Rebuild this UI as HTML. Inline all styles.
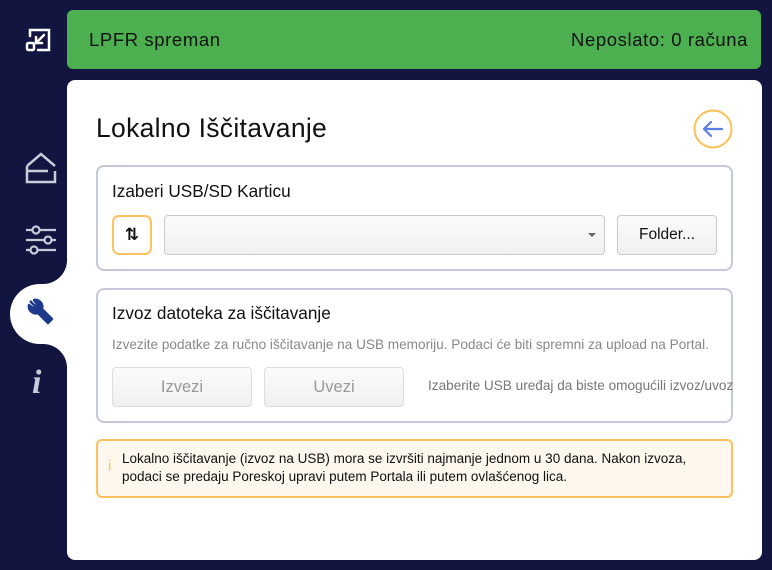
<!DOCTYPE html>
<html><head><meta charset="utf-8"><style>
*{box-sizing:border-box;margin:0;padding:0}
body{width:772px;height:570px;background:#121540;font-family:"Liberation Sans","DejaVu Sans",sans-serif;position:relative;overflow:hidden;color:#111}
.abs{position:absolute}
.green{left:67px;top:10px;width:694px;height:59px;background:#4caf50;border-radius:6px;font-size:18.5px;letter-spacing:0.6px;color:#111;display:flex;justify-content:space-between;align-items:center;padding:0 13px 0 22px}
.panel{left:67px;top:80px;width:695px;height:480px;background:#fff;border-radius:8px}
.card{border:2px solid #c5c8d8;border-radius:8px;background:#fff}
.btn{border:1px solid #c9c9c9;border-radius:4px;background:linear-gradient(#fbfbfb,#f0f0f0);display:flex;align-items:center;justify-content:center;font-size:15.5px}
</style></head><body>
<div class="abs green"><span>LPFR spreman</span><span>Neposlato: 0 računa</span></div>
<div class="abs panel"></div>
<div class="abs" style="left:10px;top:284px;width:60px;height:60px;background:#fff;border-radius:30px 0 0 30px"></div>
<svg class="abs" style="left:40px;top:262px" width="28" height="104"><path d="M27 0 V22 H4 A24 24 0 0 0 27 0Z" fill="#fff"/><path d="M27 104 V82 H4 A24 24 0 0 1 27 104Z" fill="#fff"/></svg>
<svg class="abs" style="left:24px;top:26px" width="28" height="28" fill="none" stroke="#fff" stroke-width="2.5" stroke-linecap="round"><path d="M6 10V4H25V24H14"/><rect x="3" y="17" width="7" height="7" rx="1.5"/><path d="M20 9L12 17M12 11V17H18"/></svg>
<svg class="abs" style="left:24px;top:150px" width="34" height="34" fill="none" stroke="#c8cbd8" stroke-width="2.5"><path d="M3 16L17 4L31 16M3 21H24M3 16V32H31V21"/></svg>
<svg class="abs" style="left:24px;top:225px" width="34" height="30" fill="none" stroke="#c8cbd8" stroke-width="2.2"><path d="M2 5H8M16 5H32M2 15H20M28 15H32M2 25H6M14 25H32"/><circle cx="12" cy="5" r="3.5"/><circle cx="24" cy="15" r="3.5"/><circle cx="10" cy="25" r="3.5"/></svg>
<svg class="abs" style="left:25px;top:297px" width="32" height="32"><path d="M5 4L11 10 M9 3A7 7 0 0 1 17 12L27 22L23 26L13 16A7 7 0 0 1 4 8L8 11L11 10L12 7Z" fill="#1d3a8a" stroke="#1d3a8a" stroke-width="2.5" stroke-linejoin="round"/></svg>
<div class="abs" style="left:32px;top:364px;font:italic bold 34px 'Liberation Serif',serif;color:#c8cbd8">i</div>
<div class="abs" style="left:96px;top:113px;font-size:26.5px;letter-spacing:0.3px">Lokalno Iščitavanje</div>
<svg class="abs" style="left:693px;top:109px" width="40" height="40"><circle cx="20" cy="20" r="18.5" fill="none" stroke="#ffbf57" stroke-width="2"/><path d="M29 20H11M18 13L11 20L18 27" fill="none" stroke="#5b7de8" stroke-width="2.2" stroke-linecap="round" stroke-linejoin="round"/></svg>
<div class="abs card" style="left:96px;top:165px;width:637px;height:106px"></div>
<div class="abs" style="left:112px;top:181px;font-size:17.2px">Izaberi USB/SD Karticu</div>
<div class="abs" style="left:112px;top:215px;width:40px;height:40px;border:2px solid #ffc060;border-radius:7px;background:#fff;display:flex;align-items:center;justify-content:center;font-weight:bold;font-size:17px">⇅</div>
<div class="abs btn" style="left:164px;top:215px;width:441px;height:40px;justify-content:flex-end;padding-right:8px"><span style="border-left:4px solid transparent;border-right:4px solid transparent;border-top:4px solid #666"></span></div>
<div class="abs btn" style="left:617px;top:215px;width:100px;height:40px">Folder...</div>
<div class="abs card" style="left:96px;top:288px;width:637px;height:135px"></div>
<div class="abs" style="left:112px;top:303px;font-size:17.2px">Izvoz datoteka za iščitavanje</div>
<div class="abs" style="left:112px;top:337px;font-size:13.6px;color:#888;white-space:nowrap">Izvezite podatke za ručno iščitavanje na USB memoriju. Podaci će biti spremni za upload na Portal.</div>
<div class="abs btn" style="left:112px;top:367px;width:140px;height:40px;color:#999;border-color:#ddd;font-size:16.5px">Izvezi</div>
<div class="abs btn" style="left:264px;top:367px;width:140px;height:40px;color:#999;border-color:#ddd;font-size:16.5px">Uvezi</div>
<div class="abs" style="left:428px;top:378px;font-size:13.6px;color:#777;white-space:nowrap">Izaberite USB uređaj da biste omogućili izvoz/uvoz</div>
<div class="abs" style="left:96px;top:439px;width:637px;height:59px;border:2px solid #ffc060;border-radius:6px;background:#fdf7ee"></div>
<div class="abs" style="left:107px;top:455px;font-size:16px;color:#ffc060">¡</div>
<div class="abs" style="left:122px;top:450px;font-size:13.5px;line-height:18px;color:#111;white-space:nowrap">Lokalno iščitavanje (izvoz na USB) mora se izvršiti najmanje jednom u 30 dana. Nakon izvoza,<br>podaci se predaju Poreskoj upravi putem Portala ili putem ovlašćenog lica.</div>
</body></html>
